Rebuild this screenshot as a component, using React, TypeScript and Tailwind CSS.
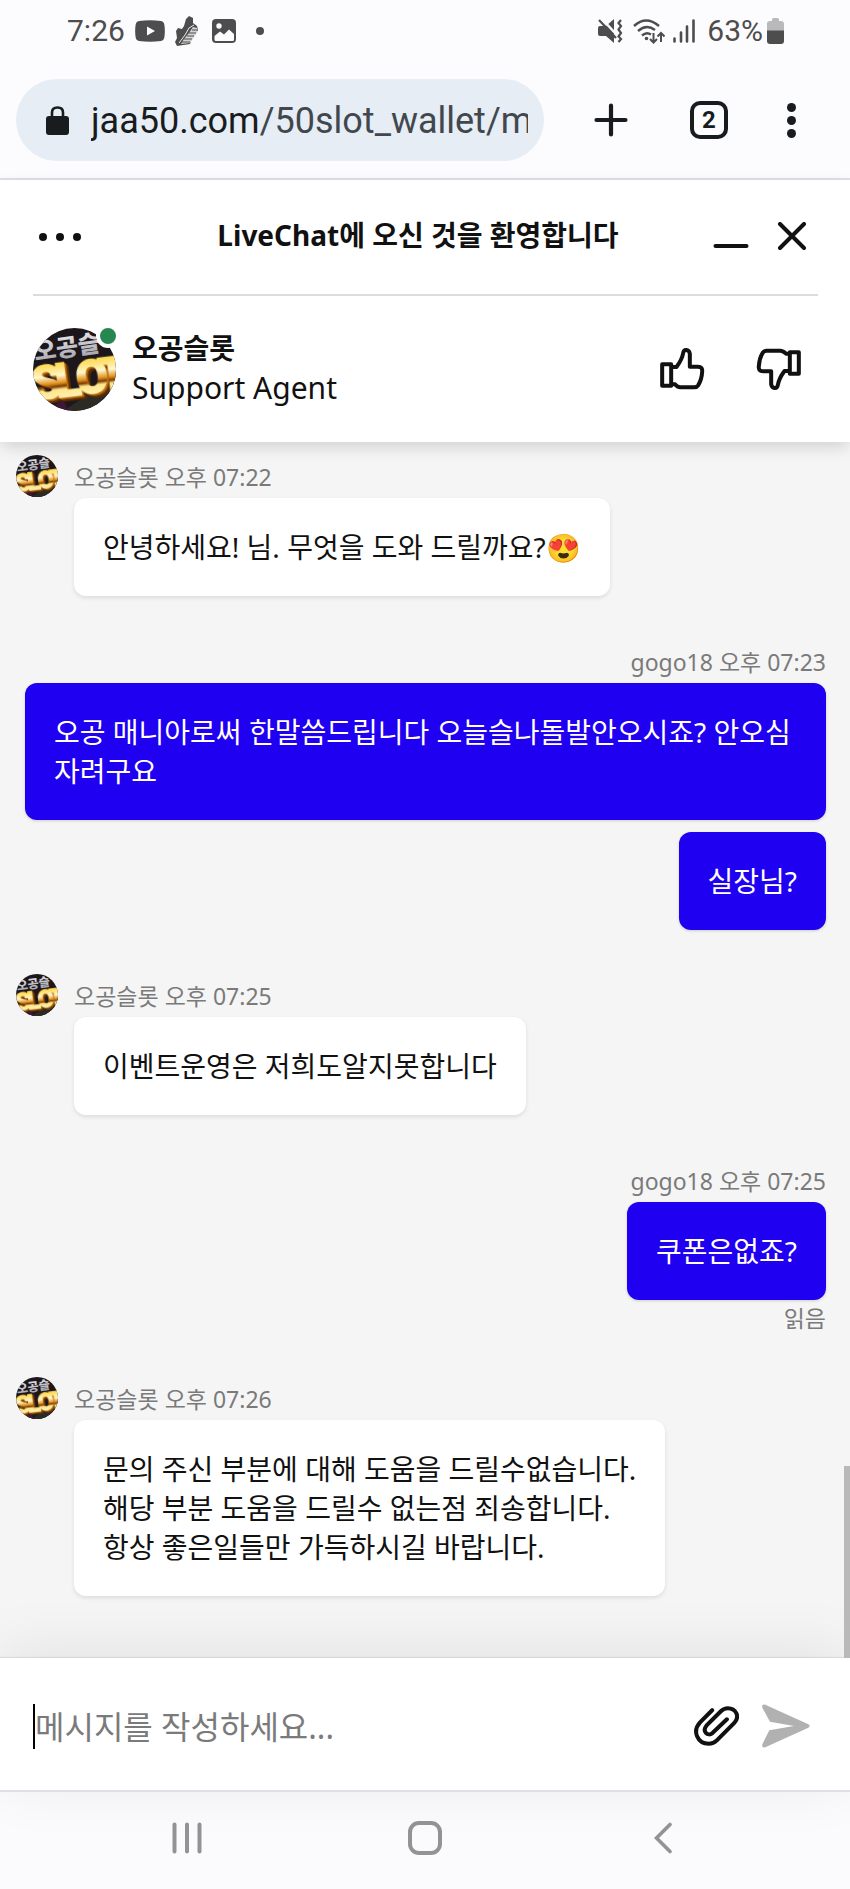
import React from "react";

type Message = { text: string };
type Group = {
  author: string;
  time: string;
  mine?: boolean;
  read?: boolean;
  messages: Message[];
};

const groups: Group[] = [
  { author: "오공슬롯", time: "오후 07:22", messages: [{ text: "안녕하세요! 님. 무엇을 도와 드릴까요?😍" }] },
  {
    author: "gogo18",
    time: "오후 07:23",
    mine: true,
    messages: [
      { text: "오공 매니아로써 한말씀드립니다 오늘슬나돌발안오시죠? 안오심 자려구요" },
      { text: "실장님?" },
    ],
  },
  { author: "오공슬롯", time: "오후 07:25", messages: [{ text: "이벤트운영은 저희도알지못합니다" }] },
  { author: "gogo18", time: "오후 07:25", mine: true, read: true, messages: [{ text: "쿠폰은없죠?" }] },
  {
    author: "오공슬롯",
    time: "오후 07:26",
    messages: [
      {
        text: "문의 주신 부분에 대해 도움을 드릴수없습니다.\n해당 부분 도움을 드릴수 없는점 죄송합니다.\n항상 좋은일들만 가득하시길 바랍니다.",
      },
    ],
  },
];

function Avatar({ id, className }: { id: string; className: string }) {
  return (
    <svg viewBox="0 0 83 83" className={className} aria-hidden="true">
      <defs>
        <clipPath id={`${id}-clip`}>
          <circle cx="41.5" cy="41.5" r="41.5" />
        </clipPath>
        <linearGradient id={`${id}-gold`} x1="0" y1="0" x2="0" y2="1">
          <stop offset="0.2" stopColor="#ffdc5a" />
          <stop offset="0.4" stopColor="#fff6cc" />
          <stop offset="0.54" stopColor="#e0901a" />
          <stop offset="0.6" stopColor="#7a3c04" />
          <stop offset="0.66" stopColor="#ffe58a" />
          <stop offset="0.8" stopColor="#fff0b0" />
          <stop offset="1" stopColor="#f2b52e" />
        </linearGradient>
        <linearGradient id={`${id}-silver`} x1="0" y1="0" x2="0" y2="1">
          <stop offset="0" stopColor="#f4f4f6" />
          <stop offset="1" stopColor="#9c9ca4" />
        </linearGradient>
      </defs>
      <g clipPath={`url(#${id}-clip)`}>
        <rect width="83" height="83" fill="#1d171c" />
        <path d="M50 70 L83 40 V83 H30Z" fill="#2c2a24" />
        <path d="M12 83 L30 72 L36 83Z" fill="#3d1733" />
        <g transform="rotate(-8 41 20)">
          <text
            x="1"
            y="27"
            fontSize="24"
            fontWeight="900"
            fontFamily="'Noto Sans CJK KR', sans-serif"
            fill={`url(#${id}-silver)`}
          >
            오공슬
          </text>
        </g>
        <g
          transform="rotate(-7 41 50)"
          style={{
            filter:
              "drop-shadow(1px 1px 0 #c8780f) drop-shadow(1px 1px 0 #a05a0a) drop-shadow(2px 2px 0 #5a2c05)",
          }}
        >
          <text
            x="-1 22 43 66"
            y="67"
            fontSize="46"
            fontWeight="700"
            fontFamily="'Liberation Sans Narrow', Roboto, sans-serif"
            fill={`url(#${id}-gold)`}
            stroke={`url(#${id}-gold)`}
            strokeWidth="2.5"
          >
            SLOT
          </text>
        </g>
      </g>
    </svg>
  );
}

function StatusBar() {
  return (
    <div className="flex h-[62px] items-center justify-between pr-[66px] pl-[67px] text-[30px] leading-none text-[#4d4d4d]">
      <div className="flex items-center">
        <span>7:26</span>
        <svg viewBox="0 0 30 22" className="ml-[10px] h-[22px] w-[30px]" aria-hidden="true">
          <path d="M4 1Q15 -.6 26 1Q29 1.4 29.4 5Q30.3 11 29.4 17Q29 20.600 26 21Q15 22.600 4 21Q1 20.600.600 17Q-.3 11 .600 5Q1 1.400 4 1Z" fill="currentColor" />
          <path d="M12 6.500 20 11 12 15.500Z" fill="#fcfcfe" />
        </svg>
        <svg viewBox="0 0 24 30" className="ml-[10px] h-[30px] w-6" aria-hidden="true">
          <path d="M11 3 14 0 18 2 18 7 22 10 23 14 19 20 16 25 15 28 2 30 0 26 2 22 1 15 3 12 7 13 9 10Z" fill="currentColor" />
          <path d="M18 11 22 12 23 15 19 21 15 27 6 28 9 23 14 17Z" fill="#d4d4d6" />
          <path d="M17 14H23M14 17H21M12 20H19M9 23H17M7 26H15" stroke="currentColor" strokeWidth="1.200" fill="none" />
          <path d="M19 9 14 12 10 19 4 27" stroke="#fcfcfe" strokeWidth="0.900" fill="none" />
        </svg>
        <svg viewBox="0 0 24 24" className="ml-[13px] size-6" aria-hidden="true">
          <rect width="24" height="24" rx="4" fill="currentColor" />
          <circle cx="7" cy="7" r="2.700" fill="#fcfcfe" />
          <path d="M2.500 17 8 12.500 12 15.500 17 10.500 22 15V20.500Q22 22 20.500 22H4Q2.500 22 2.500 20.500Z" fill="#fcfcfe" />
        </svg>
        <span className="ml-5 size-2 rounded-full bg-[#4d4d4d]" />
      </div>
      <div className="flex items-center">
        <svg viewBox="0 0 25 24" className="h-6 w-[25px]" aria-hidden="true">
          <path d="M2 7H8L16 0V24L8 17H2Q0 17 0 15V9Q0 7 2 7Z" fill="currentColor" />
          <path d="M4 0 18 15" stroke="#fcfcfe" strokeWidth="2.500" />
          <path d="M1 1 18 19" stroke="currentColor" strokeWidth="2.200" />
          <path d="M23 1 20.500 4 23 7 20.500 10.500 23 14 20.500 17.500 23 20 20.500 23" stroke="currentColor" strokeWidth="2.200" fill="none" />
        </svg>
        <svg viewBox="0 0 32 25" className="ml-[10px] h-[25px] w-8" fill="none" stroke="currentColor" aria-hidden="true">
          <path d="M1 7Q13 -4 26 7M5 12Q13.500 4.500 22 11M9 16.500Q13.500 12.500 18 15.500" strokeWidth="2.400" />
          <circle cx="13.500" cy="19.500" r="1.800" fill="currentColor" stroke="none" />
          <path d="M20.500 14V23M17 20 20.500 23.500 24 20M28 23V14M24.500 17.500 28 14 31.500 17.500" strokeWidth="2" />
        </svg>
        <svg viewBox="0 0 22 24" className="ml-2 h-6 w-[22px]" stroke="currentColor" strokeWidth="2.600" strokeLinecap="round" aria-hidden="true">
          <path d="M1.500 19.500V22.500M8 13.500V22.500M14 7.500V22.500M20.500 1.500V22.500" />
        </svg>
        <span className="ml-3">63%</span>
        <svg viewBox="0 0 17 26" className="ml-1 h-[26px] w-[17px]" aria-hidden="true">
          <path d="M5 1.500Q5 0 6.500 0H10.500Q12 0 12 1.500V3H14Q17 3 17 6V13H0V6Q0 3 3 3H5Z" fill="#b9b9bb" />
          <path d="M0 12.500H17V23Q17 26 14 26H3Q0 26 0 23Z" fill="currentColor" />
        </svg>
      </div>
    </div>
  );
}

function BrowserBar() {
  return (
    <div className="flex items-center border-b-2 border-[#dde1e6] px-4 pt-[17px] pb-[17px] text-[#191c1e]">
      <button
        type="button"
        aria-label="주소 표시줄"
        className="flex h-[82px] min-w-0 flex-1 items-center rounded-full bg-[#e6edf4] pr-4 pl-[30px] text-left"
      >
        <svg viewBox="0 0 23 29" className="h-[29px] w-[23px] shrink-0" aria-hidden="true">
          <rect x="0" y="10" width="23" height="19" rx="3" fill="currentColor" />
          <path d="M6 11V6.500Q6 1.500 11.500 1.500T17 6.500V11" fill="none" stroke="currentColor" strokeWidth="2.600" />
        </svg>
        <span className="ml-[22px] min-w-0 flex-1 overflow-hidden pt-[2px] text-[36px] leading-[48px] whitespace-nowrap">
          jaa50.com<span className="text-[#42474e]">/50slot_wallet/m</span>
        </span>
      </button>
      <div className="ml-[18px] flex items-center pr-[10px]">
        <button type="button" aria-label="새 탭" className="flex h-12 w-[98px] items-center justify-center">
          <svg viewBox="0 0 34 34" className="size-[34px]" stroke="currentColor" strokeWidth="4.200" strokeLinecap="round" aria-hidden="true">
            <path d="M17 2.500V31.500M2.500 17H31.500" />
          </svg>
        </button>
        <button type="button" aria-label="탭 2개" className="flex h-12 w-[98px] items-center justify-center">
          <span className="flex size-[38px] items-center justify-center rounded-[10px] border-4 border-[#191c1e] text-[24px] leading-none font-bold">
            2
          </span>
        </button>
        <button type="button" aria-label="더보기" className="flex h-12 w-[66px] flex-col items-center justify-center gap-1">
          <span className="size-[9px] rounded-full bg-[#191c1e]" />
          <span className="size-[9px] rounded-full bg-[#191c1e]" />
          <span className="size-[9px] rounded-full bg-[#191c1e]" />
        </button>
      </div>
    </div>
  );
}

function ThumbIcon({ down }: { down?: boolean }) {
  return (
    <svg
      viewBox="0 0 140 132"
      className={down ? "h-11 w-[47px] rotate-180" : "h-11 w-[47px]"}
      fill="none"
      stroke="currentColor"
      strokeWidth="12"
      strokeLinejoin="round"
      aria-hidden="true"
    >
      <path d="M9 52H36V116H9Z" />
      <path d="M40 60H52C61 48 69 36 72 18C74 5 89 6 92 20V59H116C127 59 130 65 129 74C128 94 122 107 117 115Q113 121 106 121H64Q54 120 48 112H40" />
    </svg>
  );
}

function ChatHeader() {
  return (
    <header className="relative z-10 bg-white pr-8 pl-[33px] shadow-[0_6px_16px_-2px_rgba(0,0,0,0.16)]">
      <div className="flex h-[116px] items-center border-b-2 border-[#dcdcdc]">
        <div className="w-[107px]">
          <button type="button" aria-label="메뉴" className="flex h-12 items-center gap-[9px] px-[6px]">
            <span className="size-2 rounded-full bg-[#111]" />
            <span className="size-2 rounded-full bg-[#111]" />
            <span className="size-2 rounded-full bg-[#111]" />
          </button>
        </div>
        <h1 className="flex-1 pb-1 text-center text-[28px] leading-[39px] font-bold whitespace-nowrap">
          LiveChat에 오신 것을 환영합니다
        </h1>
        <button type="button" aria-label="최소화" className="flex h-12 w-[70px] items-center justify-center">
          <svg viewBox="0 0 36 32" className="h-8 w-9" stroke="currentColor" strokeWidth="4" strokeLinecap="round" aria-hidden="true">
            <path d="M2.500 25H33.500" />
          </svg>
        </button>
        <button type="button" aria-label="닫기" className="flex h-12 w-[52px] items-center justify-center">
          <svg viewBox="0 0 30 30" className="size-[30px]" stroke="currentColor" strokeWidth="4" strokeLinecap="round" aria-hidden="true">
            <path d="M3 2 27 26M27 2 3 26" />
          </svg>
        </button>
      </div>
      <div className="flex h-[146px] items-center">
        <div className="relative">
          <Avatar id="agent" className="size-[83px]" />
          <span className="absolute -top-1 -right-1 size-6 rounded-full border-4 border-white bg-[#268750]" />
        </div>
        <div className="ml-4 pb-[2px] leading-10">
          <p className="text-[28px] font-bold">오공슬롯</p>
          <p className="text-[30px]">Support Agent</p>
        </div>
        <div className="ml-auto flex gap-4">
          <button type="button" aria-label="좋아요" className="flex h-12 w-20 items-center justify-center">
            <ThumbIcon />
          </button>
          <button type="button" aria-label="싫어요" className="flex h-12 w-20 items-center justify-center">
            <ThumbIcon down />
          </button>
        </div>
      </div>
    </header>
  );
}

function MessageGroup({ group, index }: { group: Group; index: number }) {
  const meta = (
    <p className="pt-[2px] text-[23px] leading-[41px] text-[#7a7a7a]">
      {group.author} {group.time}
    </p>
  );
  const bubble = group.mine
    ? "w-fit rounded-xl bg-[#2000f0] px-[29px] pt-[30px] pb-[29px] text-white shadow-[0_1px_3px_rgba(0,0,0,0.16)]"
    : "w-fit rounded-xl bg-white px-[29px] pt-[30px] pb-[29px] text-[#111] shadow-[0_2px_4px_rgba(0,0,0,0.1)]";
  return (
    <li className={group.mine ? "flex justify-end pr-6 pl-[25px]" : "flex items-start gap-4 pr-6 pl-4"}>
      {!group.mine && <Avatar id={`msg-${index}`} className="size-[42px] shrink-0" />}
      <div className={group.mine ? "flex flex-col items-end" : "flex flex-col items-start"}>
        {meta}
        <div className={group.mine ? "flex flex-col items-end gap-3" : "flex flex-col items-start gap-3"}>
          {group.messages.map((m) => (
            <div key={m.text} className={bubble}>
              <p className="text-[28px] leading-[39px] break-keep whitespace-pre-line">{m.text}</p>
            </div>
          ))}
        </div>
        {group.read && <p className="mt-1 text-[23px] leading-[29px] text-[#7a7a7a]">읽음</p>}
      </div>
    </li>
  );
}

function Composer() {
  return (
    <form
      onSubmit={(e: React.FormEvent) => e.preventDefault()}
      className="relative z-10 flex h-[134px] items-center border-b-2 border-[#dde1e6] bg-white pt-1 pr-[30px] pl-[33px] shadow-[0_-1px_1px_rgba(0,0,0,0.08),0_-8px_60px_rgba(0,0,0,0.08)]"
    >
      <span className="h-[45px] w-[2px] bg-black" aria-hidden="true" />
      <input
        type="text"
        aria-label="메시지"
        placeholder="메시지를 작성하세요..."
        className="h-[60px] min-w-0 flex-1 bg-transparent text-[32px] text-[#111] outline-none placeholder:text-[#7a7a7a] placeholder:opacity-100"
      />
      <button type="button" aria-label="파일 첨부" className="flex size-[60px] items-center justify-center">
        <svg viewBox="0 0 134 118" className="h-10 w-[45px]" fill="none" stroke="currentColor" strokeWidth="12" strokeLinecap="round" aria-hidden="true">
          <path d="M54 12 18 48C-6 74 10 112 44 112C54 112 62 108 68 102L120 50C138 30 124 6 101 6C92 6 86 9 80 15L37 58C24 74 40 92 55 80L98 39" />
        </svg>
      </button>
      <button type="submit" aria-label="보내기" className="ml-[6px] flex h-[60px] w-[68px] items-center justify-center">
        <svg viewBox="0 0 144 130" className="h-11 w-12" fill="#b1b1b1" aria-hidden="true">
          <path d="M1 10Q-2 -2 10 1L139 60Q147 65 139 70L10 129Q-2 132 1 120L22 78L96 65L24 52Z" />
        </svg>
      </button>
    </form>
  );
}

function NavBar() {
  return (
    <nav className="grid h-[97px] grid-cols-3 bg-[#fbfbfe] px-[68px] pb-[5px] text-[#939395]">
      <button type="button" aria-label="최근 앱" className="flex items-center justify-center">
        <svg viewBox="0 0 30 32" className="h-8 w-[30px]" stroke="currentColor" strokeWidth="4" strokeLinecap="round" aria-hidden="true">
          <path d="M2.500 2.500V29.500M15 2.500V29.500M27.500 2.500V29.500" />
        </svg>
      </button>
      <button type="button" aria-label="홈" className="flex items-center justify-center">
        <span className="size-[34px] rounded-[11px] border-4 border-[#939395]" />
      </button>
      <button type="button" aria-label="뒤로" className="flex items-center justify-center">
        <svg viewBox="0 0 18 32" className="h-8 w-[18px]" fill="none" stroke="currentColor" strokeWidth="3.600" strokeLinecap="round" aria-hidden="true">
          <path d="M16 2.500 2.500 16 16 29.500" />
        </svg>
      </button>
    </nav>
  );
}

export default function App() {
  return (
    <div className="flex min-h-screen flex-col bg-[#fcfcfe] font-['Noto_Sans','Noto_Sans_CJK_KR',sans-serif] text-[#111]">
      <div className="font-[Roboto,sans-serif]">
        <StatusBar />
        <BrowserBar />
      </div>
      <ChatHeader />
      <main className="relative flex-1 bg-[#f5f5f5]">
        <ul className="flex flex-col gap-11 pt-[13px] pb-[61px]">
          {groups.map((group, i) => (
            <MessageGroup key={i} group={group} index={i} />
          ))}
        </ul>
        <div className="absolute right-0 bottom-0 z-20 h-[192px] w-[6px] bg-[#b9b9b9]" />
      </main>
      <Composer />
      <NavBar />
    </div>
  );
}
